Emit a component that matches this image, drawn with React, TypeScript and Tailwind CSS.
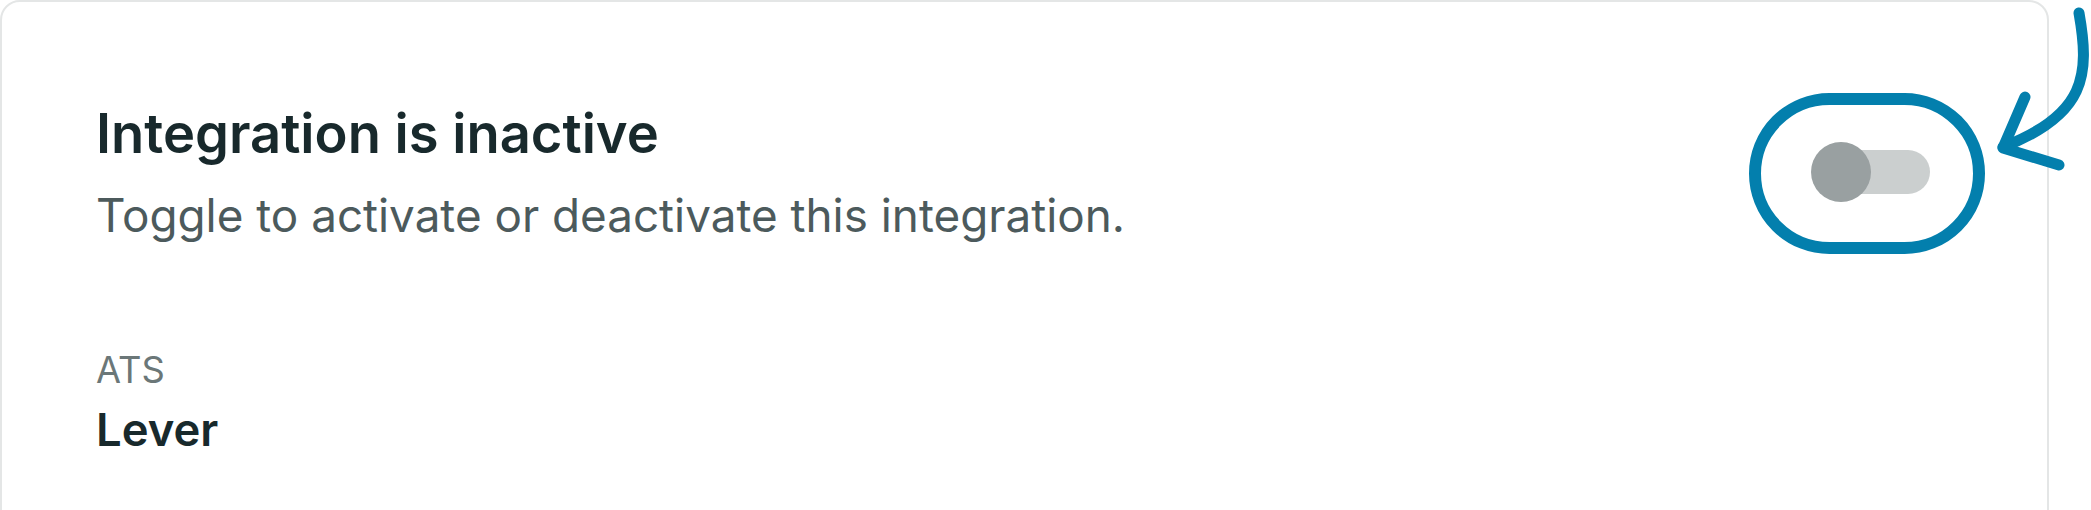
import React from "react";

function Toggle() {
  return (
    <div className="relative h-[60px] w-[119px] shrink-0 flex items-center justify-end">
      <div className="h-[44px] w-[100px] rounded-full bg-[#cbcfcf]" />
      <div className="absolute left-0 top-0 h-[60px] w-[60px] rounded-full bg-[#99a0a1]" />
    </div>
  );
}

function Annotation() {
  return (
    <svg
      className="pointer-events-none absolute left-0 top-0"
      width="2091"
      height="510"
      viewBox="0 0 2091 510"
      fill="none"
    >
      <rect
        x="1755"
        y="99"
        width="224"
        height="149"
        rx="74.5"
        stroke="#037fad"
        strokeWidth="12"
      />
      <path
        d="M2079 13 C2090 75 2086 115 2003 147"
        stroke="#037fad"
        strokeWidth="11"
        strokeLinecap="round"
      />
      <path
        d="M2025 97 L2003 148 L2059 165"
        stroke="#037fad"
        strokeWidth="11"
        strokeLinecap="round"
        strokeLinejoin="round"
      />
    </svg>
  );
}

export default function App() {
  return (
    <div
      className="relative h-[510px] w-full overflow-hidden bg-white pr-[42px]"
      style={{ fontFamily: "Inter, 'Noto Sans', sans-serif" }}
    >
      <div className="rounded-[20px] border-2 border-[#e4e6e6] pl-[94px] pr-[117px] pt-[95px] pb-[97px]">
        <div className="flex items-center justify-between">
          <div>
            <h2 className="text-[54.3px] font-semibold leading-[72.6px] text-[#18292c]">
              Integration is inactive
            </h2>
            <p className="mt-[14px] text-[45.8px] leading-[63.6px] text-[#4c5a5c]">
              Toggle to activate or deactivate this integration.
            </p>
          </div>
          <Toggle />
        </div>
        <div className="mt-[96px]">
          <div className="text-[36.3px] leading-[54.5px] text-[#6b7778]">ATS</div>
          <div className="text-[45.4px] font-semibold leading-[63.6px] text-[#18292c]">
            Lever
          </div>
        </div>
      </div>
      <Annotation />
    </div>
  );
}
